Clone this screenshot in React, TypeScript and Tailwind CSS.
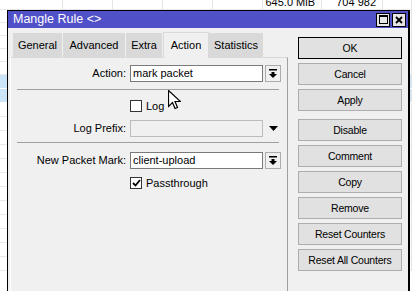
import React from 'react';

const buttons = ['OK', 'Cancel', 'Apply', 'Disable', 'Comment', 'Copy', 'Remove', 'Reset Counters', 'Reset All Counters'];
const tabs = ['General', 'Advanced', 'Extra', 'Action', 'Statistics'];
const tabWidths: Record<string, string> = {
  General: 'w-[50px]',
  Advanced: 'w-[63px]',
  Extra: 'w-[37px]',
  Action: 'w-[46px]',
  Statistics: 'w-[55px]',
};

function DropIcon() {
  return (
    <svg width="8" height="9" viewBox="0 0 8 9">
      <rect x="0" y="0" width="8" height="1.5" fill="#000" />
      <rect x="2.5" y="3" width="3" height="2" fill="#000" />
      <path d="M0 5h8l-4 4z" fill="#000" />
    </svg>
  );
}

function Combo({ value }: { value: string }) {
  return (
    <div className="flex items-center gap-[2px]">
      <div className="flex h-[17px] w-[133px] items-center border border-[#7a7a7a] bg-white pl-[2px] text-[11px] leading-none text-black">
        {value}
      </div>
      <div className="flex h-[17px] w-[16px] items-center justify-center border border-[#acacac] bg-[#f0f0f0]">
        <DropIcon />
      </div>
    </div>
  );
}

function Check({ checked, label }: { checked?: boolean; label: string }) {
  return (
    <div className="flex items-center pl-[119px]">
      <div className="flex h-[12px] w-[12px] items-center justify-center border border-[#333] bg-white">
        {checked && (
          <svg width="9" height="8" viewBox="0 0 9 8">
            <path d="M1 4l2.5 2.5L8 1" fill="none" stroke="#000" strokeWidth="1.8" />
          </svg>
        )}
      </div>
      <span className="ml-[4px] text-[11px] leading-none text-black">{label}</span>
    </div>
  );
}

function Label({ text }: { text: string }) {
  return <div className="w-[115px] text-right text-[11px] leading-none text-black">{text}</div>;
}

export default function App() {
  const rows = [10, 13, 13, 13, 13, 13, 14, 14, 14, 14, 14, 14, 14, 14, 14, 14, 14, 14, 14, 14];
  const cols = ['w-[63px]', 'w-[50px]', 'w-[50px]', 'w-[50px]', 'w-[50px]', 'w-[59px]', 'w-[61px]', 'w-[29px]'];

  return (
    <div className="relative h-[291px] w-[412px] overflow-hidden bg-white font-['Liberation_Sans',Arial,sans-serif]">
      {/* background list */}
      <div className="flex flex-col">
        {rows.map((h, r) => (
          <div
            key={r}
            className={`flex border-b ${r === 6 || r === 7 ? 'border-b-white bg-[#cce4f7]' : 'border-b-[#e8e8e8]'}`}
            style={{ height: h }}
          >
            {cols.map((c, i) => (
              <div key={i} className={`${c} flex items-end justify-end overflow-hidden border-r border-r-[#e3e3e3] pr-[6px]`}>
                {r === 0 && i === 5 && <span className="mb-[1px] text-[11px] leading-none text-black">645.0 MiB</span>}
                {r === 0 && i === 6 && <span className="mb-[1px] text-[11px] leading-none text-black">704 982</span>}
              </div>
            ))}
          </div>
        ))}
      </div>

      {/* window */}
      <div className="absolute left-[7px] top-[10px] flex h-[300px] w-[403px] flex-col border border-r-2 border-black bg-[#f0f0f0]">
        <div className="flex h-[17px] items-center justify-between bg-[#5050c8] pl-[5px] pr-[2px]">
          <span className="text-[12.5px] leading-none text-white">Mangle Rule &lt;&gt;</span>
          <div className="flex gap-[2px]">
            <div className="flex h-[14px] w-[14px] items-center justify-center border border-black bg-[#e6e6e6]">
              <div className="h-[9px] w-[9px] border border-t-2 border-black" />
            </div>
            <div className="flex h-[14px] w-[14px] items-center justify-center border border-black bg-[#e6e6e6]">
              <svg width="8" height="8" viewBox="0 0 8 8">
                <path d="M1 1l6 6M7 1l-6 6" stroke="#000" strokeWidth="1.8" />
              </svg>
            </div>
          </div>
        </div>

        <div className="flex flex-1 pl-[2px]">
          {/* tabs + panel */}
          <div className="flex w-[278px] flex-col">
            <div className="flex h-[29px] items-end pl-[3px]">
              {tabs.map((t) => (
                <div
                  key={t}
                  className={`${tabWidths[t]} flex items-center justify-center text-[11px] leading-none text-black ${
                    t === 'Action'
                      ? 'relative z-10 -mb-px h-[26px] border-x border-t border-[#d9d9d9] bg-[#f0f0f0]'
                      : 'h-[24px] border-r border-r-[#f0f0f0] bg-[#d9d9d9]'
                  }`}
                >
                  {t}
                </div>
              ))}
            </div>
            <div className="flex flex-1 flex-col border-l border-r border-t border-l-white border-r-[#a0a0a0] border-t-[#d9d9d9]">
              <div className="mt-[7px] flex items-center gap-[4px]">
                <Label text="Action:" />
                <Combo value="mark packet" />
              </div>
              <div className="ml-[6px] mr-[8px] mt-[7px] h-px bg-[#a0a0a0]" />
              <div className="mt-[10px]">
                <Check label="Log" />
              </div>
              <div className="mt-[8px] flex items-center gap-[4px]">
                <Label text="Log Prefix:" />
                <div className="flex items-center gap-[2px]">
                  <div className="h-[17px] w-[133px] border border-[#bcbcbc] bg-[#f0f0f0]" />
                  <div className="flex h-[17px] w-[16px] items-center justify-center">
                    <svg width="9" height="5" viewBox="0 0 9 5">
                      <path d="M0 0h9l-4.5 5z" fill="#000" />
                    </svg>
                  </div>
                </div>
              </div>
              <div className="ml-[6px] mr-[8px] mt-[5px] h-px bg-[#a0a0a0]" />
              <div className="mt-[9px] flex items-center gap-[4px]">
                <Label text="New Packet Mark:" />
                <Combo value="client-upload" />
              </div>
              <div className="mt-[8px]">
                <Check checked label="Passthrough" />
              </div>
            </div>
          </div>

          {/* buttons */}
          <div className="flex flex-col pl-[10px] pt-[9px]">
            {buttons.map((b, i) => (
              <div
                key={b}
                className={`flex h-[22px] w-[104px] items-center justify-center border bg-[#e1e1e1] text-[10.5px] leading-none tracking-[-0.2px] text-black ${
                  b === 'OK' ? 'border-black' : 'border-[#adadad]'
                } ${i === 0 ? '' : b === 'Disable' ? 'mt-[8px]' : 'mt-[4px]'}`}
              >
                {b}
              </div>
            ))}
          </div>
        </div>
      </div>

      {/* mouse pointer */}
      <svg className="absolute left-[168px] top-[90px]" width="13" height="20" viewBox="0 0 13 20">
        <path d="M0.5 0.5V16.5L4.5 12.5L7 18.5L9.5 17.5L7 11.5H12.5Z" fill="#fff" stroke="#000" strokeWidth="1.2" />
      </svg>
    </div>
  );
}
